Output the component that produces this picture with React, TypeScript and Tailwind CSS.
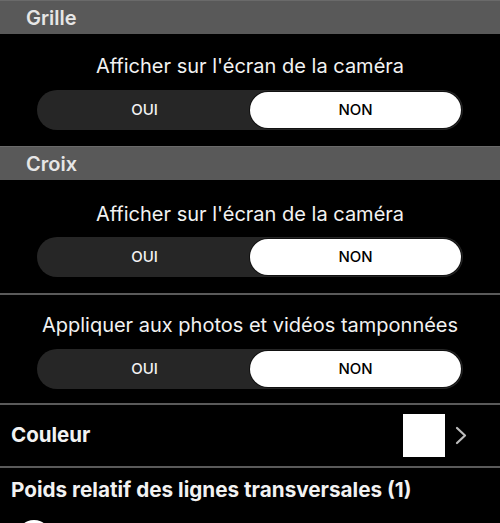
import React from "react";

const font = { fontFamily: "Inter, 'Noto Sans', sans-serif" };

function Segmented() {
  return (
    <div className="mx-[37px] h-10 rounded-full bg-[#262626] flex p-[2px]">
      <div className="flex-1 flex items-center justify-center text-[15px] font-medium text-[#f2f2f2]">OUI</div>
      <div className="flex-1 flex items-center justify-center rounded-full bg-white text-[15px] font-medium text-black shadow-[0_0_0_1px_#111]">NON</div>
    </div>
  );
}

function Header({ title }: { title: string }) {
  return (
    <div className="h-[34px] bg-[#595959] border-t border-[#6a6a6a] flex items-center pl-[26px]">
      <span className="text-[20px] font-semibold text-[#e6e6e6]">{title}</span>
    </div>
  );
}

function Label({ text }: { text: string }) {
  return <div className="text-center text-[20px] leading-6 text-[#f2f2f2]">{text}</div>;
}

export default function App() {
  return (
    <div className="w-[500px] h-[523px] bg-black overflow-hidden" style={font}>
      <Header title="Grille" />
      <div className="pt-5 pb-4">
        <Label text="Afficher sur l'écran de la caméra" />
        <div className="mt-3">
          <Segmented />
        </div>
      </div>
      <Header title="Croix" />
      <div className="pt-[22px] pb-4">
        <Label text="Afficher sur l'écran de la caméra" />
        <div className="mt-[11px]">
          <Segmented />
        </div>
      </div>
      <div className="h-[2px] bg-[#5a5a5a]" />
      <div className="pt-[18px] pb-[14px]">
        <Label text="Appliquer aux photos et vidéos tamponnées" />
        <div className="mt-3">
          <Segmented />
        </div>
      </div>
      <div className="h-[2px] bg-[#5a5a5a]" />
      <div className="h-[61px] flex items-center pl-[11px] pr-[32px]">
        <span className="flex-1 text-[20.5px] font-bold text-[#f2f2f2]">Couleur</span>
        <div className="w-[42px] h-[43px] bg-white" />
        <svg className="ml-[10px]" width="13" height="19" viewBox="0 0 13 19" fill="none">
          <path d="M2 2 L10 9.5 L2 17" stroke="#bdbdbd" strokeWidth="2.2" strokeLinecap="round" strokeLinejoin="round" />
        </svg>
      </div>
      <div className="h-[2px] bg-[#5a5a5a]" />
      <div className="pt-[10px] pl-[11px]">
        <div className="text-[20.7px] leading-6 font-bold text-[#f2f2f2]">Poids relatif des lignes transversales (1)</div>
        <div className="mt-[18px] ml-[6px] w-[34px] h-[34px] rounded-full bg-white" />
      </div>
    </div>
  );
}
